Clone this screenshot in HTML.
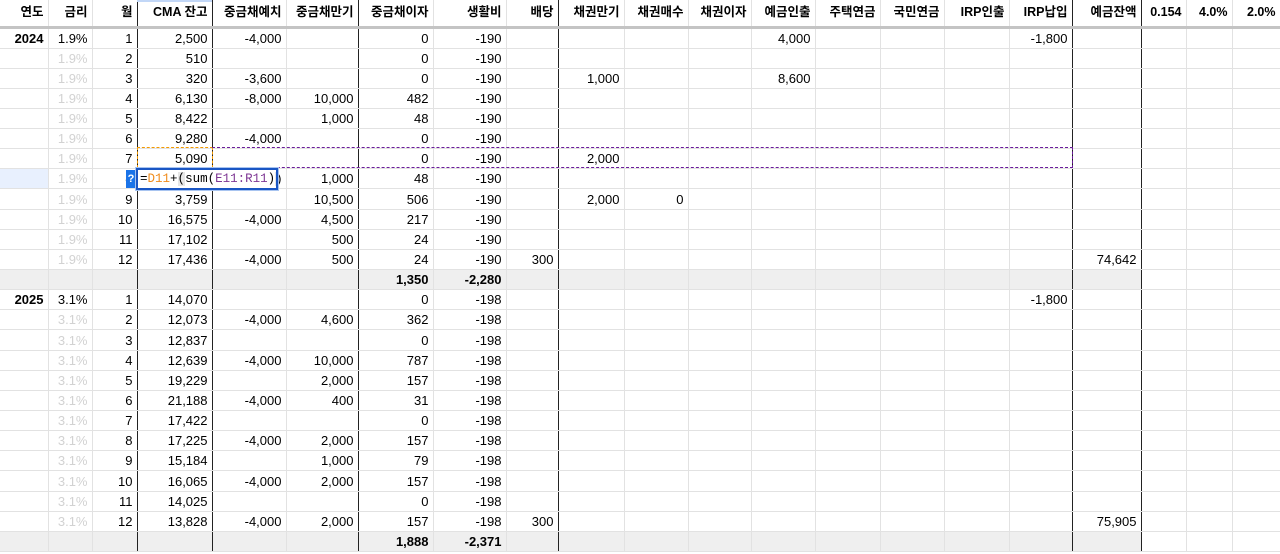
<!DOCTYPE html>
<html><head><meta charset="utf-8">
<style>
html,body{margin:0;padding:0;background:#fff;width:1280px;height:554px;overflow:hidden;}
body{position:relative;font-family:"Liberation Sans","Noto Sans CJK KR",Arial,sans-serif;font-size:13px;color:#000;}
table{border-collapse:collapse;table-layout:fixed;position:absolute;left:0;top:0;width:1280px;}
td{border-right:1px solid #e2e2e2;border-bottom:1px solid #e2e2e2;padding:0 4px 0 0;text-align:right;white-space:nowrap;overflow:hidden;height:20.15px;line-height:19px;box-sizing:border-box;}
tr.h td{height:27px;font-weight:bold;font-size:12.5px;border-bottom:3px solid #c4c4c4;line-height:22px;vertical-align:top;padding-top:1px;}
td.k{border-right:1px solid #222;}
td.g{color:#d2d2d2;}
tr.t td{background:#efefef;font-weight:bold;}
tr.t td.w{background:#fff;}
td.b{font-weight:bold;}
.ov{position:absolute;box-sizing:border-box;}
</style></head><body>
<table>
<colgroup>
<col style="width:48px"><col style="width:44px"><col style="width:45px"><col style="width:75px"><col style="width:74px"><col style="width:72px"><col style="width:75px"><col style="width:73px"><col style="width:52px"><col style="width:66px"><col style="width:64px"><col style="width:63px"><col style="width:64px"><col style="width:65px"><col style="width:64px"><col style="width:65px"><col style="width:63px"><col style="width:69px"><col style="width:45px"><col style="width:46px"><col style="width:48px">
</colgroup>
<tr class="h"><td>연도</td><td>금리</td><td class="k">월</td><td class="k">CMA 잔고</td><td>중금채예치</td><td class="k">중금채만기</td><td>중금채이자</td><td>생활비</td><td class="k">배당</td><td>채권만기</td><td>채권매수</td><td>채권이자</td><td>예금인출</td><td>주택연금</td><td>국민연금</td><td>IRP인출</td><td class="k">IRP납입</td><td class="k">예금잔액</td><td>0.154</td><td>4.0%</td><td>2.0%</td></tr>
<tr><td class="b">2024</td><td>1.9%</td><td class="k">1</td><td class="k">2,500</td><td>-4,000</td><td class="k"></td><td>0</td><td>-190</td><td class="k"></td><td></td><td></td><td></td><td>4,000</td><td></td><td></td><td></td><td class="k">-1,800</td><td class="k"></td><td></td><td></td><td></td></tr>
<tr><td></td><td class="g">1.9%</td><td class="k">2</td><td class="k">510</td><td></td><td class="k"></td><td>0</td><td>-190</td><td class="k"></td><td></td><td></td><td></td><td></td><td></td><td></td><td></td><td class="k"></td><td class="k"></td><td></td><td></td><td></td></tr>
<tr><td></td><td class="g">1.9%</td><td class="k">3</td><td class="k">320</td><td>-3,600</td><td class="k"></td><td>0</td><td>-190</td><td class="k"></td><td>1,000</td><td></td><td></td><td>8,600</td><td></td><td></td><td></td><td class="k"></td><td class="k"></td><td></td><td></td><td></td></tr>
<tr><td></td><td class="g">1.9%</td><td class="k">4</td><td class="k">6,130</td><td>-8,000</td><td class="k">10,000</td><td>482</td><td>-190</td><td class="k"></td><td></td><td></td><td></td><td></td><td></td><td></td><td></td><td class="k"></td><td class="k"></td><td></td><td></td><td></td></tr>
<tr><td></td><td class="g">1.9%</td><td class="k">5</td><td class="k">8,422</td><td></td><td class="k">1,000</td><td>48</td><td>-190</td><td class="k"></td><td></td><td></td><td></td><td></td><td></td><td></td><td></td><td class="k"></td><td class="k"></td><td></td><td></td><td></td></tr>
<tr><td></td><td class="g">1.9%</td><td class="k">6</td><td class="k">9,280</td><td>-4,000</td><td class="k"></td><td>0</td><td>-190</td><td class="k"></td><td></td><td></td><td></td><td></td><td></td><td></td><td></td><td class="k"></td><td class="k"></td><td></td><td></td><td></td></tr>
<tr><td></td><td class="g">1.9%</td><td class="k">7</td><td class="k">5,090</td><td></td><td class="k"></td><td>0</td><td>-190</td><td class="k"></td><td>2,000</td><td></td><td></td><td></td><td></td><td></td><td></td><td class="k"></td><td class="k"></td><td></td><td></td><td></td></tr>
<tr><td style="background:#e8f0fe"></td><td class="g">1.9%</td><td class="k">8</td><td class="k"></td><td>)</td><td class="k">1,000</td><td>48</td><td>-190</td><td class="k"></td><td></td><td></td><td></td><td></td><td></td><td></td><td></td><td class="k"></td><td class="k"></td><td></td><td></td><td></td></tr>
<tr><td></td><td class="g">1.9%</td><td class="k">9</td><td class="k">3,759</td><td></td><td class="k">10,500</td><td>506</td><td>-190</td><td class="k"></td><td>2,000</td><td>0</td><td></td><td></td><td></td><td></td><td></td><td class="k"></td><td class="k"></td><td></td><td></td><td></td></tr>
<tr><td></td><td class="g">1.9%</td><td class="k">10</td><td class="k">16,575</td><td>-4,000</td><td class="k">4,500</td><td>217</td><td>-190</td><td class="k"></td><td></td><td></td><td></td><td></td><td></td><td></td><td></td><td class="k"></td><td class="k"></td><td></td><td></td><td></td></tr>
<tr><td></td><td class="g">1.9%</td><td class="k">11</td><td class="k">17,102</td><td></td><td class="k">500</td><td>24</td><td>-190</td><td class="k"></td><td></td><td></td><td></td><td></td><td></td><td></td><td></td><td class="k"></td><td class="k"></td><td></td><td></td><td></td></tr>
<tr><td></td><td class="g">1.9%</td><td class="k">12</td><td class="k">17,436</td><td>-4,000</td><td class="k">500</td><td>24</td><td>-190</td><td class="k">300</td><td></td><td></td><td></td><td></td><td></td><td></td><td></td><td class="k"></td><td class="k">74,642</td><td></td><td></td><td></td></tr>
<tr class="t"><td></td><td></td><td class="k"></td><td class="k"></td><td></td><td class="k"></td><td>1,350</td><td>-2,280</td><td class="k"></td><td></td><td></td><td></td><td></td><td></td><td></td><td></td><td class="k"></td><td class="k"></td><td class="w"></td><td class="w"></td><td class="w"></td></tr>
<tr><td class="b">2025</td><td>3.1%</td><td class="k">1</td><td class="k">14,070</td><td></td><td class="k"></td><td>0</td><td>-198</td><td class="k"></td><td></td><td></td><td></td><td></td><td></td><td></td><td></td><td class="k">-1,800</td><td class="k"></td><td></td><td></td><td></td></tr>
<tr><td></td><td class="g">3.1%</td><td class="k">2</td><td class="k">12,073</td><td>-4,000</td><td class="k">4,600</td><td>362</td><td>-198</td><td class="k"></td><td></td><td></td><td></td><td></td><td></td><td></td><td></td><td class="k"></td><td class="k"></td><td></td><td></td><td></td></tr>
<tr><td></td><td class="g">3.1%</td><td class="k">3</td><td class="k">12,837</td><td></td><td class="k"></td><td>0</td><td>-198</td><td class="k"></td><td></td><td></td><td></td><td></td><td></td><td></td><td></td><td class="k"></td><td class="k"></td><td></td><td></td><td></td></tr>
<tr><td></td><td class="g">3.1%</td><td class="k">4</td><td class="k">12,639</td><td>-4,000</td><td class="k">10,000</td><td>787</td><td>-198</td><td class="k"></td><td></td><td></td><td></td><td></td><td></td><td></td><td></td><td class="k"></td><td class="k"></td><td></td><td></td><td></td></tr>
<tr><td></td><td class="g">3.1%</td><td class="k">5</td><td class="k">19,229</td><td></td><td class="k">2,000</td><td>157</td><td>-198</td><td class="k"></td><td></td><td></td><td></td><td></td><td></td><td></td><td></td><td class="k"></td><td class="k"></td><td></td><td></td><td></td></tr>
<tr><td></td><td class="g">3.1%</td><td class="k">6</td><td class="k">21,188</td><td>-4,000</td><td class="k">400</td><td>31</td><td>-198</td><td class="k"></td><td></td><td></td><td></td><td></td><td></td><td></td><td></td><td class="k"></td><td class="k"></td><td></td><td></td><td></td></tr>
<tr><td></td><td class="g">3.1%</td><td class="k">7</td><td class="k">17,422</td><td></td><td class="k"></td><td>0</td><td>-198</td><td class="k"></td><td></td><td></td><td></td><td></td><td></td><td></td><td></td><td class="k"></td><td class="k"></td><td></td><td></td><td></td></tr>
<tr><td></td><td class="g">3.1%</td><td class="k">8</td><td class="k">17,225</td><td>-4,000</td><td class="k">2,000</td><td>157</td><td>-198</td><td class="k"></td><td></td><td></td><td></td><td></td><td></td><td></td><td></td><td class="k"></td><td class="k"></td><td></td><td></td><td></td></tr>
<tr><td></td><td class="g">3.1%</td><td class="k">9</td><td class="k">15,184</td><td></td><td class="k">1,000</td><td>79</td><td>-198</td><td class="k"></td><td></td><td></td><td></td><td></td><td></td><td></td><td></td><td class="k"></td><td class="k"></td><td></td><td></td><td></td></tr>
<tr><td></td><td class="g">3.1%</td><td class="k">10</td><td class="k">16,065</td><td>-4,000</td><td class="k">2,000</td><td>157</td><td>-198</td><td class="k"></td><td></td><td></td><td></td><td></td><td></td><td></td><td></td><td class="k"></td><td class="k"></td><td></td><td></td><td></td></tr>
<tr><td></td><td class="g">3.1%</td><td class="k">11</td><td class="k">14,025</td><td></td><td class="k"></td><td>0</td><td>-198</td><td class="k"></td><td></td><td></td><td></td><td></td><td></td><td></td><td></td><td class="k"></td><td class="k"></td><td></td><td></td><td></td></tr>
<tr><td></td><td class="g">3.1%</td><td class="k">12</td><td class="k">13,828</td><td>-4,000</td><td class="k">2,000</td><td>157</td><td>-198</td><td class="k">300</td><td></td><td></td><td></td><td></td><td></td><td></td><td></td><td class="k"></td><td class="k">75,905</td><td></td><td></td><td></td></tr>
<tr class="t"><td></td><td></td><td class="k"></td><td class="k"></td><td></td><td class="k"></td><td>1,888</td><td>-2,371</td><td class="k"></td><td></td><td></td><td></td><td></td><td></td><td></td><td></td><td class="k"></td><td class="k"></td><td class="w"></td><td class="w"></td><td class="w"></td></tr>
</table>
<div class="ov" style="left:137px;top:0;width:75px;height:2px;background:#c2d7f7"></div>
<div class="ov" style="left:137px;top:147px;width:76px;height:21px;border:1px dashed #f29900"></div>
<div class="ov" style="left:212px;top:147px;width:861px;height:21px;border:1px dashed #6a1b9a;border-left:none"></div>
<div class="ov" style="left:126px;top:170px;width:10px;height:18px;background:#1a73e8;color:#fff;font-weight:bold;font-size:11px;line-height:18px;text-align:center">?</div>
<div class="ov" style="left:136px;top:168px;width:142px;height:22px;border:2px solid #1a56c4;box-shadow:0 0 0 1px #a8c4f0;background:#fff;font-family:'Liberation Mono',monospace;font-size:12.5px;line-height:18px;padding-left:2px;white-space:nowrap;overflow:hidden">=<span style="color:#f08c1c">D11</span>+<span style="background:#e6e6e6">(</span>sum(<span style="color:#7e3794">E11:R11</span>)<span style="background:#e6e6e6">)</span></div>
</body></html>
